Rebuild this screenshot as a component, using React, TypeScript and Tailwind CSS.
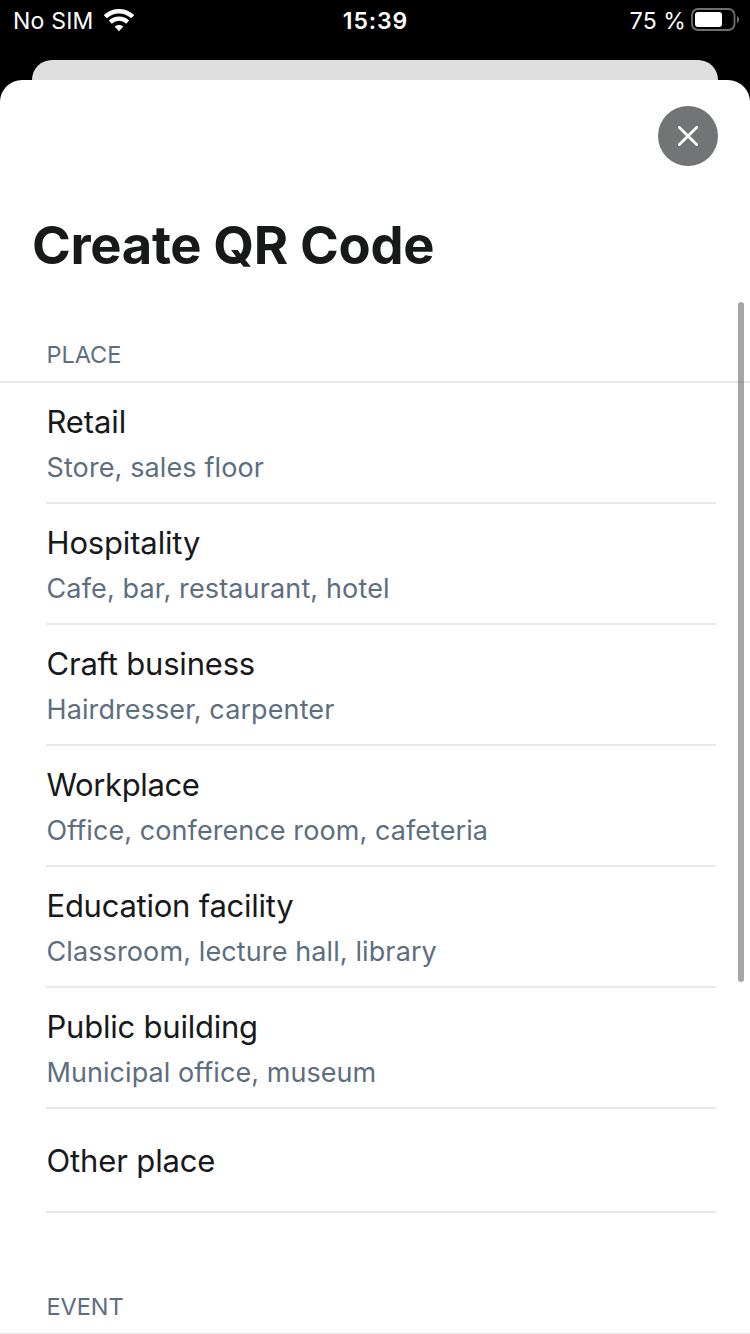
type Place = { title: string; detail?: string; titleClass: string; detailClass?: string };

const places: Place[] = [
  { title: 'Retail', detail: 'Store, sales floor', titleClass: 'tracking-[-0.13px]', detailClass: 'tracking-[0.11px]' },
  { title: 'Hospitality', detail: 'Cafe, bar, restaurant, hotel', titleClass: 'tracking-[-0.15px]', detailClass: 'tracking-[0.14px]' },
  { title: 'Craft business', detail: 'Hairdresser, carpenter', titleClass: 'tracking-[-0.2px]', detailClass: 'tracking-[0.1px]' },
  { title: 'Workplace', detail: 'Office, conference room, cafeteria', titleClass: 'tracking-[-0.38px]', detailClass: 'tracking-[0.08px]' },
  { title: 'Education facility', detail: 'Classroom, lecture hall, library', titleClass: 'tracking-[-0.25px]', detailClass: 'tracking-[0.11px]' },
  { title: 'Public building', detail: 'Municipal office, museum', titleClass: 'tracking-[-0.22px]', detailClass: 'tracking-[0.06px]' },
  { title: 'Other place', titleClass: 'tracking-[-0.14px]' },
];

function WifiIcon() {
  return (
    <svg className="ml-[10px] mt-[9px] h-[23px] w-[30px]" viewBox="0 0 30 23" fill="none">
      <path d="M1.4 7.800C9 .3 21 .3 28.6 7.800" stroke="#fff" strokeWidth="4.400" />
      <path d="M6.3 13.1c4.900-4.600 12.500-4.600 17.400 0" stroke="#fff" strokeWidth="4.400" />
      <path d="M15 22.200 10.600 17.600C13 15.400 17 15.400 19.400 17.600Z" fill="#fff" />
    </svg>
  );
}

function BatteryIcon() {
  return (
    <svg className="ml-[5px] mt-[8px] h-[23px] w-[48px]" viewBox="0 0 48 23" fill="none">
      <rect x="1" y="1" width="42.500" height="21" rx="6" stroke="#6e6e6e" strokeWidth="1.800" />
      <rect x="4" y="4" width="27" height="15" rx="3" fill="#fff" />
      <path d="M46 8c3 1.500 3 5.500 0 7Z" fill="#6e6e6e" />
    </svg>
  );
}

function StatusBar() {
  return (
    <header className="grid h-[60px] shrink-0 grid-cols-3 text-[23px] leading-[42px] text-white">
      <div className="flex items-start pl-[13px]">
        <span className="tracking-[0.2px]">No SIM</span>
        <WifiIcon />
      </div>
      <div className="pl-px text-center font-semibold tracking-[0.9px]">15:39</div>
      <div className="flex items-start justify-end pr-[11px]">
        <span className="tracking-[0.1px]">75 %</span>
        <BatteryIcon />
      </div>
    </header>
  );
}

export default function App() {
  return (
    <div className="relative flex h-[1334px] w-[750px] flex-col overflow-hidden bg-black font-['Inter',sans-serif] text-[#17191b]">
      <StatusBar />
      <div className="mx-8 h-5 shrink-0 rounded-t-[20px] bg-[#dfdfdf]" />
      <main className="flex flex-1 flex-col rounded-t-[22px] bg-white">
        <div className="flex h-[124px] shrink-0 justify-end pr-8 pt-[26px]">
          <button aria-label="Close" className="flex size-[60px] items-center justify-center rounded-full bg-[#737476]">
            <svg className="size-5" viewBox="0 0 20 20" stroke="#fff" strokeWidth="2.800" strokeLinecap="round">
              <path d="M1.400 1.400 18.600 18.600M18.600 1.400 1.400 18.600" />
            </svg>
          </button>
        </div>
        <h1 className="h-[126px] shrink-0 pl-8 pt-[8px] text-[52.5px] font-bold leading-[66px] tracking-[-0.33px]">
          <span>Create QR Code</span>
        </h1>
        <h2 className="h-[53px] shrink-0 border-b-2 border-[#e8e8e9] pl-[46.5px] pt-[9px] text-[23.5px] leading-[32px] tracking-[-0.05px] text-[#5d6e80]">
          <span>PLACE</span>
        </h2>
        <ul className="ml-[46px] mr-[34px] shrink-0">
          {places.map((p) => (
            <li
              key={p.title}
              className={`flex flex-col items-start border-b-2 border-[#e8e8e9] pl-[0.5px] ${p.detail ? 'h-[121px] pt-[19px]' : 'h-[104px] pt-[32px]'}`}
            >
              <span className={`text-[31px] leading-[40px] ${p.titleClass}`}>{p.title}</span>
              {p.detail && (
                <span className={`mt-[8px] text-[27px] leading-[36px] text-[#5d6e80] ${p.detailClass}`}>{p.detail}</span>
              )}
            </li>
          ))}
        </ul>
        <h2 className="h-[121px] shrink-0 border-b border-[#e8e8e9] pl-[46.5px] pt-[78px] text-[23.5px] leading-[32px] tracking-[-0.05px] text-[#5d6e80]">
          <span>EVENT</span>
        </h2>
      </main>
      <div className="absolute right-[6px] top-[302px] h-[680px] w-[6px] rounded-full bg-[#2f3133]/43" />
    </div>
  );
}
